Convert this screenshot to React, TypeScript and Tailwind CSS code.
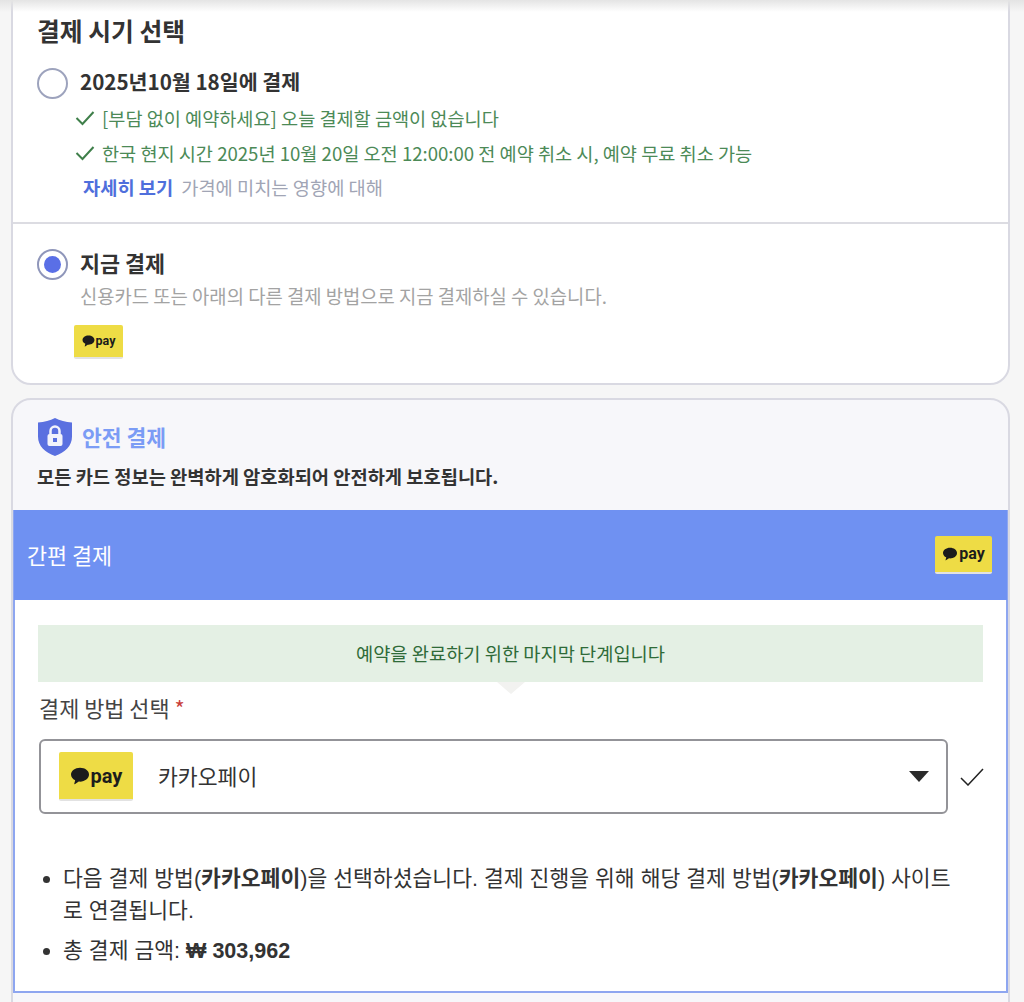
import React from 'react';

const PayBadge: React.FC<{ className: string; bubble: string; text: string; gap: string }> = ({ className, bubble, text, gap }) => (
  <div className={`flex items-center justify-center rounded-[2px] bg-[#eedc45] border-b-2 border-[#e2e2e2] ${gap} ${className}`}>
    <svg viewBox="0 0 24 22" className={bubble} fill="#1c1c1c">
      <path d="M12 1C5.9 1 1 4.7 1 9.3c0 3 2 5.6 5.1 7l-1.1 4.2c-.1.4.3.7.6.5l4.9-3.2c.5.1 1 .1 1.5.1 6.1 0 11-3.7 11-8.6S18.1 1 12 1z" />
    </svg>
    <span className={`font-['Roboto',sans-serif] font-bold text-[#1c1c1c] ${text}`}>pay</span>
  </div>
);

const Check: React.FC = () => (
  <svg viewBox="0 0 20 16" className="w-[20px] h-[16px] shrink-0" fill="none" stroke="#3f7f4a" strokeWidth="2">
    <path d="M1.5 8l6 6L18.5 2" />
  </svg>
);

export default function App() {
  return (
    <div className="relative h-[1002px] overflow-hidden bg-[#f6f6f6] font-['Noto_Sans_CJK_KR','Noto_Sans',sans-serif] text-[#333]">
      <div className="absolute inset-x-0 top-0 h-[12px] bg-gradient-to-b from-[#e4e4e4] to-transparent z-10" />
      <div className="mx-[11px] w-[999px] mt-[-20px] h-[405px] bg-white border-2 border-[#d9d9e2] rounded-[20px] flex flex-col">
        <div className="h-[242px] shrink-0 border-b-2 border-[#dcdce2] pl-[24px] pt-[30px]">
          <h2 className="text-[24.8px] leading-[36px] font-bold">결제 시기 선택</h2>
          <div className="flex items-center gap-[12px] mt-[18px]">
            <span className="w-[31px] h-[31px] rounded-full border-2 border-[#9da3bd] bg-white" />
            <span className="text-[20.6px] leading-[30px] pb-[4px] font-bold">2025년10월 18일에 결제</span>
          </div>
          <div className="flex items-center gap-[7px] ml-[38px] text-[18.6px] leading-[35px] text-[#4c8a57]">
            <Check />
            <span>[부담 없이 예약하세요] 오늘 결제할 금액이 없습니다</span>
          </div>
          <div className="flex items-center gap-[7px] ml-[38px] text-[18.6px] leading-[35px] text-[#4c8a57]">
            <Check />
            <span>한국 현지 시간 2025년 10월 20일 오전 12:00:00 전 예약 취소 시, 예약 무료 취소 가능</span>
          </div>
          <div className="flex items-center gap-[8px] ml-[46px] mt-[1px] text-[18.7px] leading-[32px]">
            <span className="font-bold text-[#4f6fdc]">자세히 보기</span>
            <span className="text-[#a1a5b5]">가격에 미치는 영향에 대해</span>
          </div>
        </div>
        <div className="pl-[24px] pt-[24px]">
          <div className="flex items-center gap-[12px]">
            <span className="w-[31px] h-[31px] rounded-full border-2 border-[#8f96ba] bg-white flex items-center justify-center">
              <span className="w-[17px] h-[17px] rounded-full bg-[#5a6fe6]" />
            </span>
            <span className="text-[21.8px] leading-[30px] pb-[2px] font-bold">지금 결제</span>
          </div>
          <p className="ml-[43px] text-[18.8px] leading-[32px] text-[#a3a3a3]">신용카드 또는 아래의 다른 결제 방법으로 지금 결제하실 수 있습니다.</p>
          <PayBadge className="ml-[37px] mt-[13px] w-[49px] h-[34px]" bubble="w-[13px] h-[12px]" text="text-[12.500px] leading-none" gap="gap-[1px]" />
        </div>
      </div>

      <div className="mx-[11px] w-[999px] mt-[13px] h-[640px] bg-[#f7f7fa] border-2 border-[#d9d9e2] rounded-t-[20px]">
        <div className="h-[110px] pl-[24px] pt-[18px]">
          <div className="flex items-center gap-[10px] ml-[1px]">
            <svg viewBox="0 0 34 38" className="w-[34px] h-[38px]">
              <path d="M17 0c5 2.500 10.500 4 17 4.500v14C34 28 27 34.500 17 38 7 34.500 0 28 0 18.500v-14C6.500 4 12 2.500 17 0z" fill="#5a70e0" />
              <rect x="9.500" y="16" width="15" height="12" rx="2" fill="#f2f3fb" />
              <path d="M12.500 16v-3a4.500 4.500 0 019 0v3" fill="none" stroke="#f2f3fb" strokeWidth="2.500" />
              <rect x="15" y="20" width="4" height="4" fill="#5a70e0" />
            </svg>
            <span className="text-[21.5px] leading-[30px] font-bold text-[#7b9cf5]">안전 결제</span>
          </div>
          <p className="mt-[6px] text-[18.7px] leading-[28px] font-bold">모든 카드 정보는 완벽하게 암호화되어 안전하게 보호됩니다.</p>
        </div>
        <div className="border-2 border-[#8ea6f0] border-t-0 bg-white h-[483px]">
          <div className="h-[90px] -mx-[1px] bg-[#6f91f2] flex items-center justify-between pl-[13px] pr-[15px]">
            <span className="text-[21.8px] text-white">간편 결제</span>
            <PayBadge className="w-[57px] h-[38px]" bubble="w-[16px] h-[14px]" text="text-[16px] leading-none" gap="gap-[1px]" />
          </div>
          <div className="pl-[23px] pt-[25px]">
            <div className="relative w-[945px] h-[57px] bg-[#e4f0e4] flex items-center justify-center text-[18.7px] text-[#2f6b38]">
              예약을 완료하기 위한 마지막 단계입니다
              <span className="absolute left-[459px] top-full w-0 h-0 border-x-[14px] border-x-transparent border-t-[12px] border-t-[#f2f2f0]" />
            </div>
            <div className="mt-[12px] ml-[1px] text-[21.9px] leading-[28px] text-[#444]">
              결제 방법 선택 <span className="text-[#c9403a]">*</span>
            </div>
            <div className="flex items-center mt-[17px]">
              <div className="w-[909px] ml-[1px] h-[75px] border-2 border-[#939398] rounded-[6px] flex items-center pl-[18px] pr-[17px]">
                <PayBadge className="w-[74px] h-[49px]" bubble="w-[20px] h-[18px]" text="text-[20px] leading-none" gap="gap-[1px]" />
                <span className="ml-[25px] text-[21.6px] text-[#333]">카카오페이</span>
                <span className="ml-auto w-0 h-0 border-x-[10px] border-x-transparent border-t-[11px] border-t-[#2b2b2b]" />
              </div>
              <svg viewBox="0 0 24 18" className="ml-[12px] w-[24px] h-[18px]" fill="none" stroke="#222" strokeWidth="1.500">
                <path d="M1 10l7 7L23 1" />
              </svg>
            </div>
            <ul className="mt-[49px] ml-[25px] list-disc list-outside font-['Liberation_Sans','Noto_Sans_CJK_KR',sans-serif] text-[21.55px] leading-[32px] text-[#333] w-[895px] break-all">
              <li className="mb-[8px]">다음 결제 방법(<b>카카오페이</b>)을 선택하셨습니다. 결제 진행을 위해 해당 결제 방법(<b>카카오페이</b>) 사이트로 연결됩니다.</li>
              <li>총 결제 금액: <b>₩ 303,962</b></li>
            </ul>
          </div>
        </div>
      </div>
    </div>
  );
}
